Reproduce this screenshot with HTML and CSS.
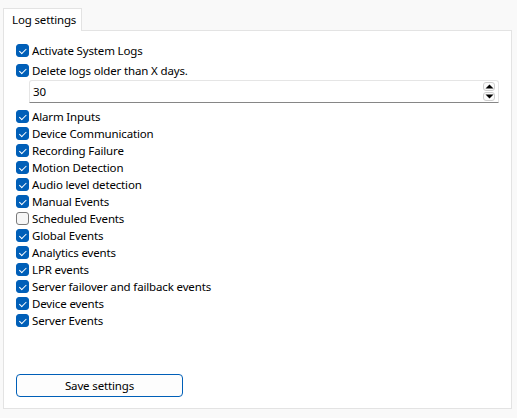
FILE: index.html
```html
<!DOCTYPE html>
<html>
<head>
<meta charset="utf-8">
<link rel="stylesheet" href="styles.css">
</head>
<body>
<div class="window">
  <div class="tabs">
    <div class="tab">Log settings</div>
  </div>
  <div class="pane">
    <div class="top-group">
      <label class="row"><span class="cb on"></span>Activate System Logs</label>
      <label class="row"><span class="cb on"></span>Delete logs older than X days.</label>
    </div>
    <div class="spin">
      <span class="spin-value">30</span>
      <span class="spin-btns">
        <span class="sb"><svg width="9" height="5" viewBox="0 0 9 5"><path d="M0.5 4.5 L4.5 0.5 L8.5 4.5 Z" fill="#000"/></svg></span>
        <span class="sb"><svg width="9" height="5" viewBox="0 0 9 5"><path d="M0.5 0.5 L4.5 4.5 L8.5 0.5 Z" fill="#000"/></svg></span>
      </span>
    </div>
    <div class="list">
      <label class="row"><span class="cb on"></span>Alarm Inputs</label>
      <label class="row"><span class="cb on"></span>Device Communication</label>
      <label class="row"><span class="cb on"></span>Recording Failure</label>
      <label class="row"><span class="cb on"></span>Motion Detection</label>
      <label class="row"><span class="cb on"></span>Audio level detection</label>
      <label class="row"><span class="cb on"></span>Manual Events</label>
      <label class="row"><span class="cb"></span>Scheduled Events</label>
      <label class="row"><span class="cb on"></span>Global Events</label>
      <label class="row"><span class="cb on"></span>Analytics events</label>
      <label class="row"><span class="cb on"></span>LPR events</label>
      <label class="row"><span class="cb on"></span>Server failover and failback events</label>
      <label class="row"><span class="cb on"></span>Device events</label>
      <label class="row"><span class="cb on"></span>Server Events</label>
    </div>
    <div class="spacer"></div>
    <button class="save">Save settings</button>
  </div>
</div>
</body>
</html>
```

FILE: styles.css
```css
html, body {
  margin: 0;
  padding: 0;
  background: #f9f9f9;
}
body {
  font-family: "Noto Sans", "Open Sans", sans-serif;
  font-size: 11.5px;
  letter-spacing: -0.15px;
  color: #000;
}
.window {
  width: 517px;
  height: 418px;
  padding: 8px 5px 9px 3px;
  box-sizing: border-box;
  display: flex;
  flex-direction: column;
}
.tabs {
  display: flex;
  height: 22px;
}
.tab {
  width: 79px;
  box-sizing: border-box;
  border: 1px solid #e3e3e3;
  border-bottom: none;
  background: #fff;
  padding-left: 8px;
  line-height: 21px;
  position: relative;
  z-index: 1;
  margin-bottom: -1px;
}
.pane {
  flex: 1;
  background: #fff;
  border: 1px solid #e3e3e3;
  display: flex;
  flex-direction: column;
  padding: 11px 12px 11px 12px;
}
.row {
  display: flex;
  align-items: center;
  height: 17px;
  gap: 3px;
  white-space: nowrap;
}
.top-group {
  display: flex;
  flex-direction: column;
  gap: 3px;
}
.cb {
  width: 13px;
  height: 13px;
  box-sizing: border-box;
  border-radius: 3px;
  border: 1px solid #7a7a7a;
  background: #f6f6f6;
  flex: none;
  position: relative;
}
.cb.on {
  background: #005fb8;
  border-color: #005fb8;
}
.cb.on::after {
  content: "";
  position: absolute;
  left: 3.5px;
  top: 1.5px;
  width: 3px;
  height: 5.5px;
  border-right: 1.2px solid #fff;
  border-bottom: 1.2px solid #fff;
  transform: rotate(45deg);
}
.spin {
  margin: 1px 0 0 13px;
  height: 23px;
  box-sizing: border-box;
  border: 1px solid #e5e5e5;
  border-bottom: 1px solid #868686;
  border-radius: 3px 3px 0 0;
  display: flex;
  align-items: center;
  justify-content: space-between;
  padding: 0 3px 0 3px;
  background: #fff;
}
.spin-value {
  line-height: 20px;
}
.spin-btns {
  display: flex;
  flex-direction: column;
  gap: 1px;
}
.sb {
  width: 12px;
  height: 9px;
  box-sizing: border-box;
  border: 1px solid #cfcfcf;
  border-radius: 3px;
  display: flex;
  align-items: center;
  justify-content: center;
  background: #fbfbfb;
}
.sb svg {
  display: block;
}
.list {
  margin-top: 5px;
  display: flex;
  flex-direction: column;
}
.spacer {
  flex: 1;
}
.save {
  width: 167px;
  height: 23px;
  font-family: inherit;
  font-size: 11.5px;
  letter-spacing: -0.15px;
  color: #000;
  background: #fdfdfd;
  border: 1px solid #005fb8;
  border-radius: 4px;
  padding: 0;
  align-self: flex-start;
}
```
